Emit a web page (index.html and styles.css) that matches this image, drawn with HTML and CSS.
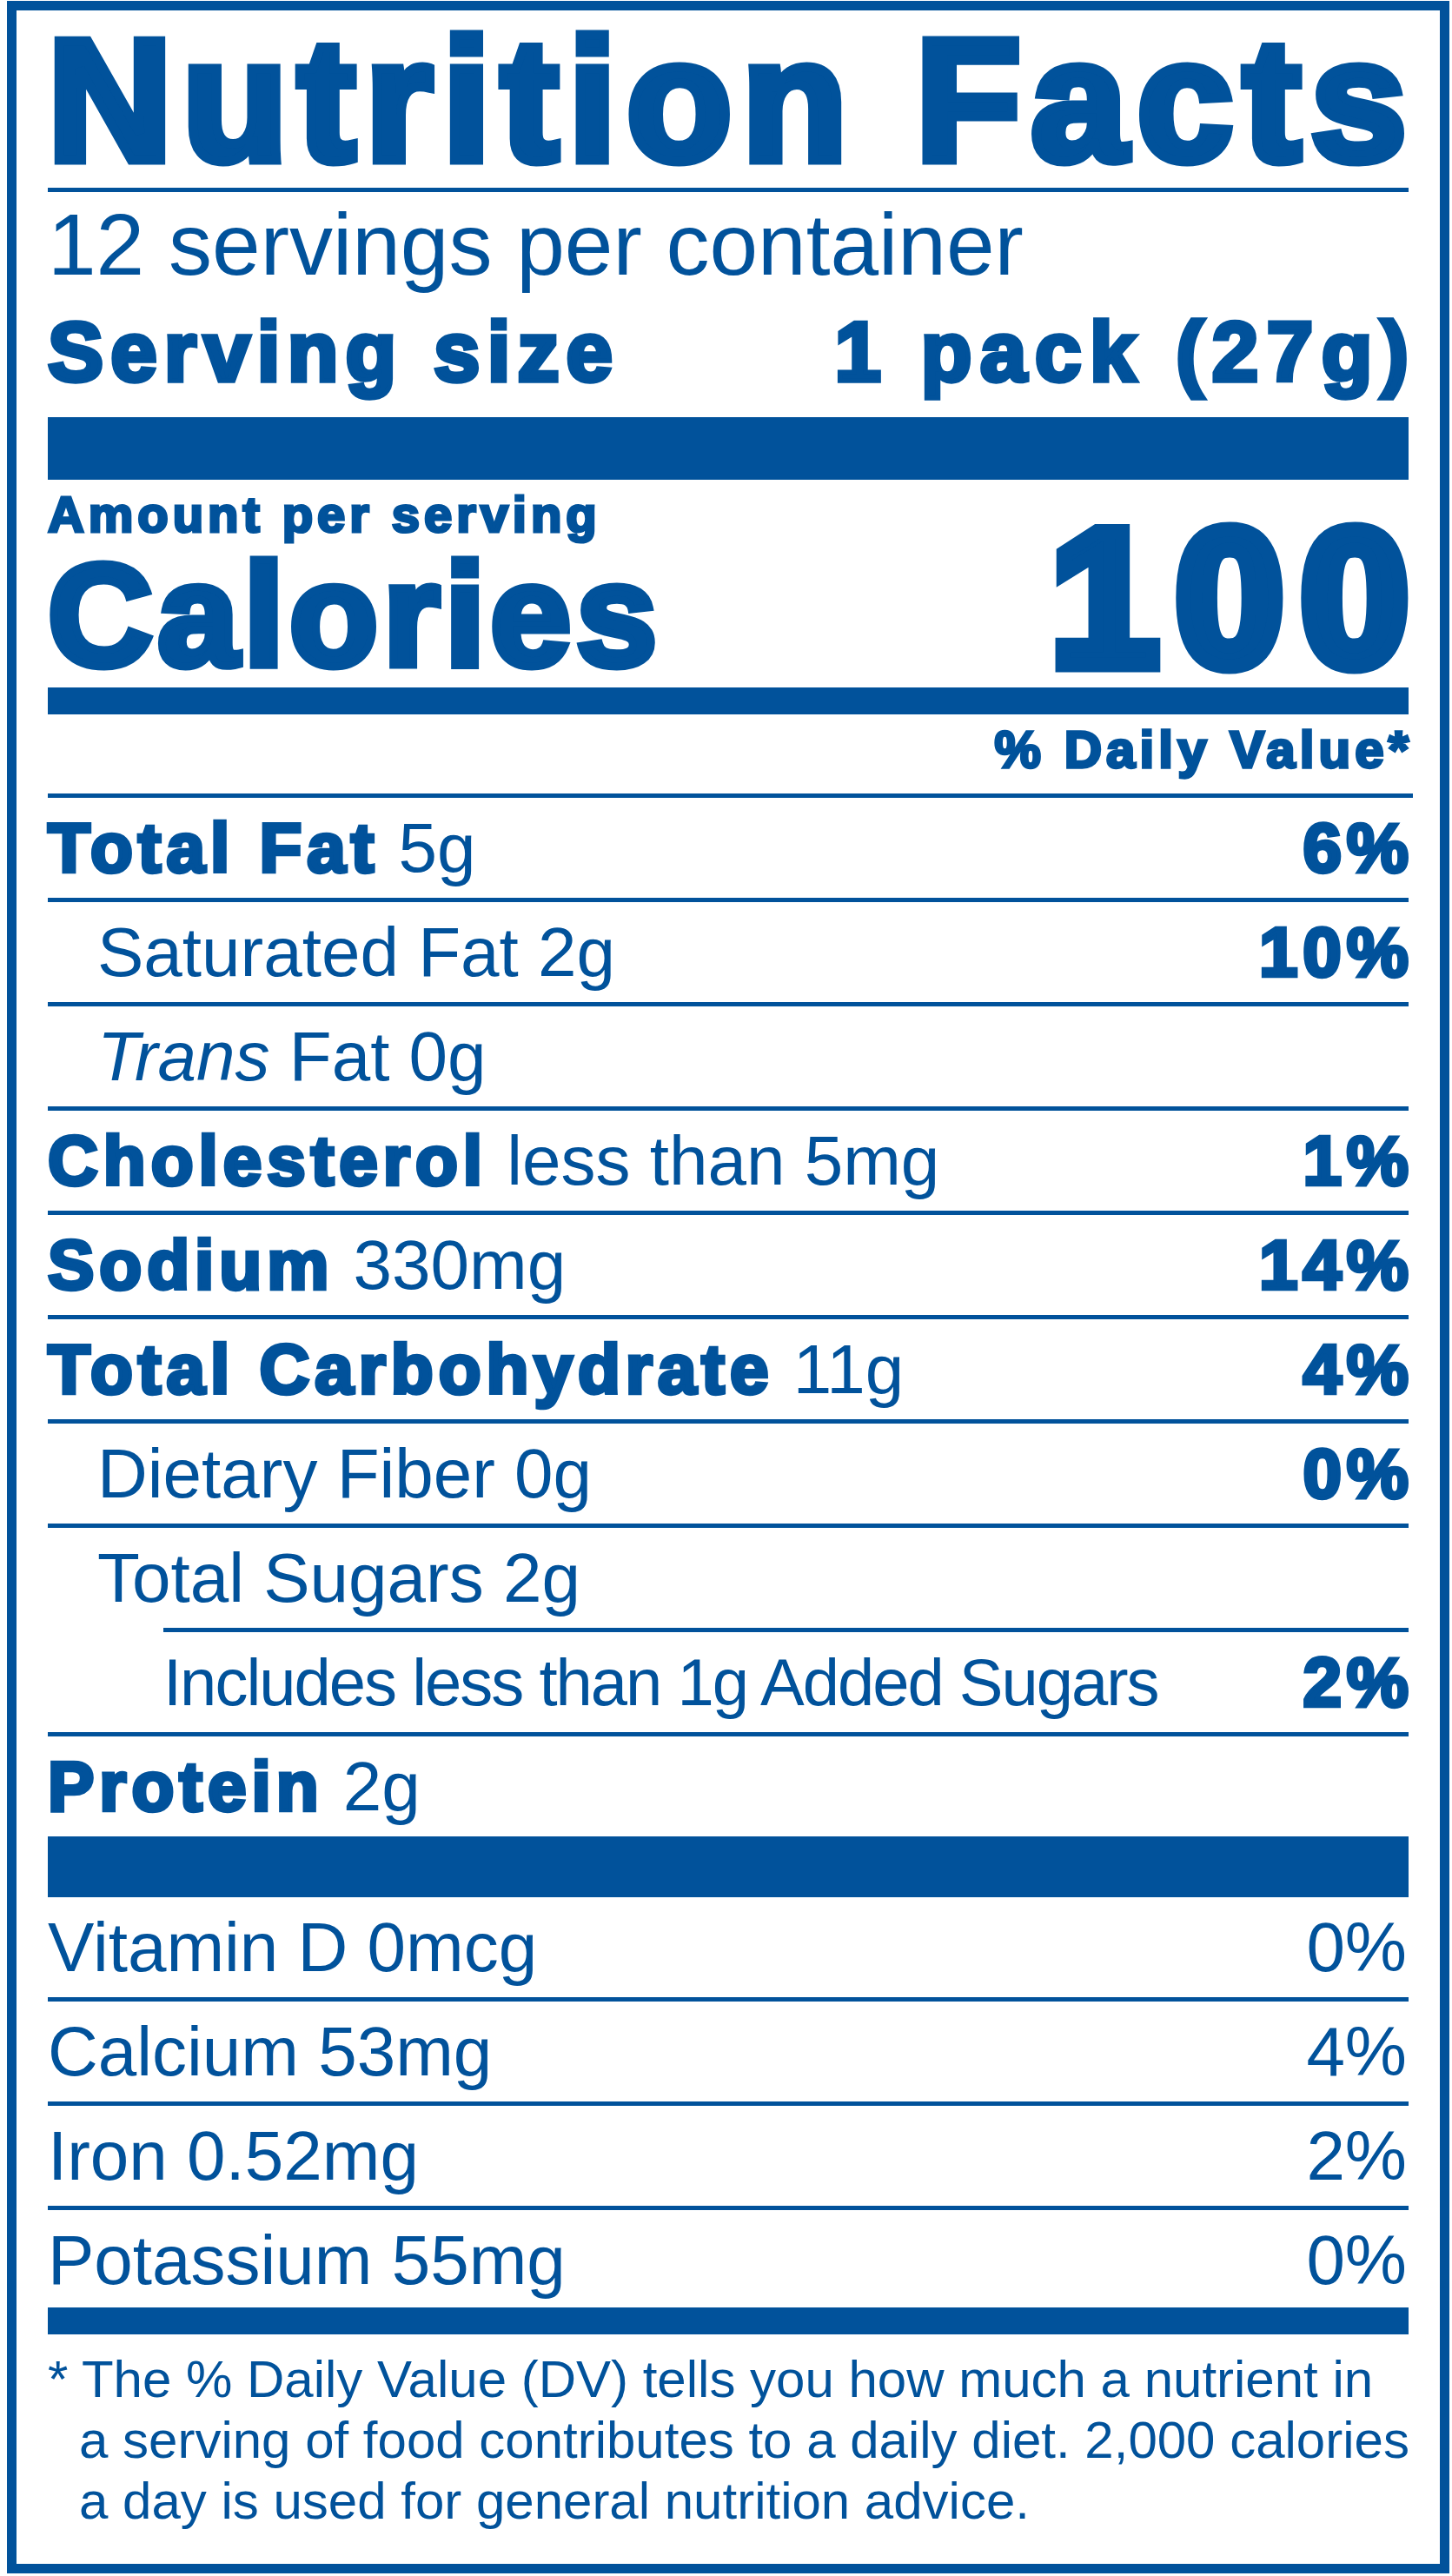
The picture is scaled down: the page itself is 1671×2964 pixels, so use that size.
FILE: index.html
```html
<!DOCTYPE html>
<html lang="en">
<head>
<meta charset="utf-8">
<title>Nutrition Facts</title>
<link rel="stylesheet" href="styles.css">
</head>
<body>
<section class="label">
  <h1 class="title">Nutrition Facts</h1>
  <div class="servings">12 servings per container</div>
  <div class="serving-size"><span class="ss-label">Serving size</span><span class="ss-value">1 pack (27g)</span></div>
  <div class="bar bar-thick"></div>
  <div class="amount">Amount per serving</div>
  <div class="calories"><span class="cal-label">Calories</span><span class="cal-value">100</span></div>
  <div class="bar bar-mid"></div>
  <div class="dv-head">% Daily Value*</div>

  <div class="row"><span><b class="blk">Total Fat</b> 5g</span><b class="blk pct">6%</b></div>
  <div class="row indent"><span>Saturated Fat 2g</span><b class="blk pct">10%</b></div>
  <div class="row indent"><span><i>Trans</i> Fat 0g</span></div>
  <div class="row"><span><b class="blk">Cholesterol</b> less than 5mg</span><b class="blk pct">1%</b></div>
  <div class="row"><span><b class="blk">Sodium</b> 330mg</span><b class="blk pct">14%</b></div>
  <div class="row"><span><b class="blk">Total Carbohydrate</b> 11g</span><b class="blk pct">4%</b></div>
  <div class="row indent"><span>Dietary Fiber 0g</span><b class="blk pct">0%</b></div>
  <div class="row indent no-rule"><span>Total Sugars 2g</span></div>
  <div class="rule rule-indent"></div>
  <div class="row indent2"><span class="added">Includes less than 1g Added Sugars</span><b class="blk pct">2%</b></div>
  <div class="row no-rule"><span><b class="blk">Protein</b> 2g</span></div>
  <div class="bar bar-low"></div>

  <div class="row"><span>Vitamin D 0mcg</span><span class="pct-reg">0%</span></div>
  <div class="row"><span>Calcium 53mg</span><span class="pct-reg">4%</span></div>
  <div class="row"><span>Iron 0.52mg</span><span class="pct-reg">2%</span></div>
  <div class="row no-rule last"><span>Potassium 55mg</span><span class="pct-reg">0%</span></div>
  <div class="bar bar-mid"></div>

  <p class="footnote">* The % Daily Value (DV) tells you how much a nutrient in<br>a serving of food contributes to a daily diet. 2,000 calories<br>a day is used for general nutrition advice.</p>
</section>
</body>
</html>
```
FILE: styles.css
```css
html, body {
  margin: 0;
  padding: 0;
  background: #ffffff;
}

body {
  font-family: "Liberation Sans", Arial, Helvetica, sans-serif;
  color: #01529b;
}

.label {
  box-sizing: border-box;
  width: 1660px;
  height: 2960px;
  margin: 1px 0 0 8px;
  border: 11px solid #01529b;
  padding: 0 36px;
}

.blk {
  font-weight: 700;
  -webkit-text-stroke: 0.055em currentColor;
  letter-spacing: 0.075em;
}

.title {
  margin: 0;
  padding-top: 3px;
  font-size: 198px;
  line-height: 201px;
  font-weight: 700;
  letter-spacing: 11.9px;
  -webkit-text-stroke: 11px currentColor;
  white-space: nowrap;
  border-bottom: 5px solid #01529b;
}

.servings {
  font-size: 100px;
  line-height: 121px;
  white-space: nowrap;
}

.serving-size {
  display: flex;
  justify-content: space-between;
  font-size: 96px;
  line-height: 125px;
  font-weight: 700;
  -webkit-text-stroke: 0.055em currentColor;
  white-space: nowrap;
}

.ss-label {
  letter-spacing: 0.085em;
}

.ss-value {
  letter-spacing: 0.1em;
  margin-right: -0.1em;
}

.bar {
  background: #01529b;
}

.bar-thick {
  height: 72px;
  margin-top: 13px;
}

.bar-mid {
  height: 31px;
}

.bar-low {
  height: 70px;
}

.amount {
  font-size: 58px;
  line-height: 80px;
  font-weight: 700;
  -webkit-text-stroke: 0.055em currentColor;
  letter-spacing: 0.085em;
  white-space: nowrap;
}

.calories {
  display: flex;
  justify-content: space-between;
  align-items: flex-start;
  height: 159px;
  font-weight: 700;
  white-space: nowrap;
}

.cal-label {
  font-size: 167px;
  line-height: 150px;
  letter-spacing: 0.036em;
  -webkit-text-stroke: 9px currentColor;
}

.cal-value {
  font-size: 223px;
  line-height: 111px;
  letter-spacing: 20px;
  margin-right: -20px;
  -webkit-text-stroke: 17px currentColor;
}

.dv-head {
  text-align: right;
  font-size: 60px;
  line-height: 82px;
  padding-bottom: 9px;
  font-weight: 700;
  -webkit-text-stroke: 0.055em currentColor;
  letter-spacing: 0.085em;
  margin-right: -0.085em;
  border-bottom: 5px solid #01529b;
  white-space: nowrap;
}

.row {
  display: flex;
  justify-content: space-between;
  font-size: 80px;
  line-height: 115px;
  height: 115px;
  border-bottom: 5px solid #01529b;
  white-space: nowrap;
}

.row i {
  font-style: italic;
}

.indent {
  padding-left: 57px;
}

.indent2 {
  padding-left: 133px;
}

.no-rule {
  border-bottom: none;
}

.rule {
  height: 5px;
  background: #01529b;
}

.rule-indent {
  margin-left: 133px;
}

.added {
  font-size: 76px;
  letter-spacing: -2px;
}

.pct {
  margin-right: -0.075em;
}

.pct-reg {
  margin-right: 2px;
}

.last {
  height: 112px;
}

.footnote {
  margin: 0;
  padding: 17px 0 0 36px;
  text-indent: -36px;
  font-size: 60px;
  line-height: 70px;
  white-space: nowrap;
}
```
